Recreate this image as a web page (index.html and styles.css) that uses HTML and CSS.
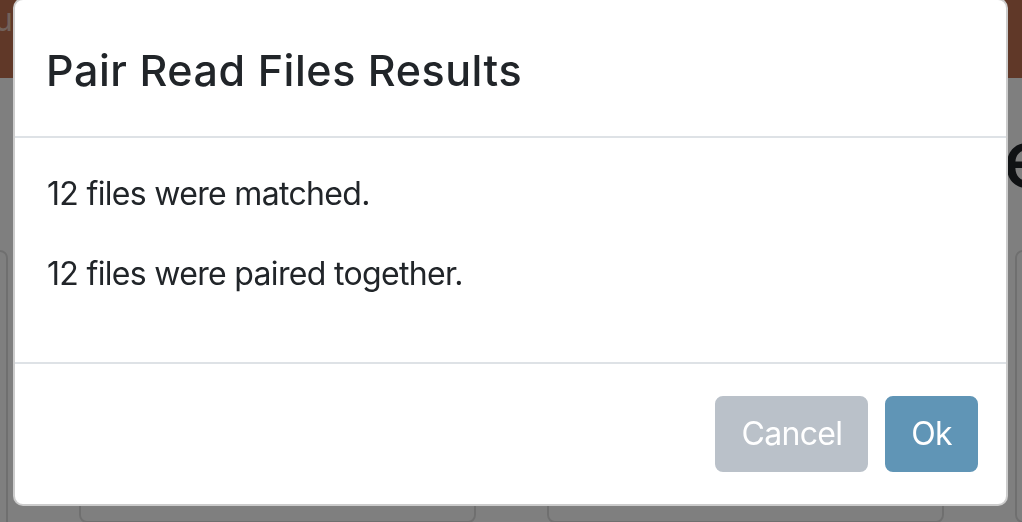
FILE: index.html
```html
<!DOCTYPE html>
<html lang="en">
<head>
<meta charset="utf-8">
<title>Pair Read Files Results</title>
<link rel="stylesheet" href="styles.css">
</head>
<body>
<div class="page">
  <header class="navbar"><span class="brand">u</span></header>
  <main class="content">
    <h1 class="heading">e</h1>
    <div class="cards">
      <div class="card card-first"></div>
      <div class="card"></div>
      <div class="card"></div>
      <div class="card"></div>
    </div>
  </main>
</div>
<div class="backdrop"></div>
<div class="modal">
  <div class="modal-header">
    <h5 class="modal-title">Pair Read Files Results</h5>
  </div>
  <div class="modal-body">
    <p>12 files were matched.</p>
    <p>12 files were paired together.</p>
  </div>
  <div class="modal-footer">
    <button class="btn btn-cancel" type="button">Cancel</button>
    <button class="btn btn-ok" type="button">Ok</button>
  </div>
</div>
</body>
</html>
```
FILE: styles.css
```css
html, body {
  margin: 0;
  padding: 0;
  width: 1022px;
  height: 522px;
  overflow: hidden;
  background: #ffffff;
  font-family: Inter, "Liberation Sans", sans-serif;
  color: #212529;
}

.page {
  width: 1022px;
  height: 522px;
  overflow: hidden;
}

.navbar {
  height: 78px;
  background: #c07050;
  display: flex;
  align-items: flex-start;
}

.brand {
  margin-left: -6px;
  margin-top: 2px;
  font-size: 32px;
  line-height: 36px;
  color: rgba(255, 255, 255, 0.6);
}

.content {
  display: flex;
  flex-direction: column;
}

.heading {
  margin: 32px 0 0 1003px;
  font-size: 80px;
  line-height: 96px;
  font-weight: 500;
  white-space: nowrap;
  color: #212529;
}

.cards {
  display: flex;
  gap: 71px;
  margin-left: -389px;
  margin-top: 44px;
  align-items: flex-start;
}

.card {
  flex: 0 0 397px;
  height: 273px;
  box-sizing: border-box;
  border: 2px solid rgba(0, 0, 0, 0.125);
  border-radius: 8px;
}

.card-first {
  height: 400px;
}

.backdrop {
  position: fixed;
  inset: 0;
  background: rgba(0, 0, 0, 0.5);
}

.modal {
  position: absolute;
  left: 13px;
  top: -2px;
  width: 995px;
  box-sizing: border-box;
  background: #ffffff;
  border: 2px solid rgba(0, 0, 0, 0.2);
  border-radius: 10px;
}

.modal-header {
  padding: 40px 32px 36px;
  border-bottom: 2px solid #dee2e6;
}

.modal-title {
  margin: 0 0 0 -1px;
  font-size: 43px;
  line-height: 60px;
  font-weight: 500;
  letter-spacing: 0.55px;
  color: #212529;
}

.modal-body {
  padding: 32px;
}

.modal-body p {
  margin: 0 0 32px;
  font-size: 32px;
  line-height: 48px;
  letter-spacing: -0.68px;
  color: #212529;
}

.modal-footer {
  border-top: 2px solid #dee2e6;
  padding: 24px 28px 24px 24px;
  display: flex;
  justify-content: flex-end;
  align-items: center;
  gap: 17px;
}

.btn {
  margin: 8px 0;
  padding: 12px 24px;
  font-family: inherit;
  font-size: 32px;
  line-height: 48px;
  font-weight: 400;
  letter-spacing: -0.68px;
  color: #ffffff;
  border: 2px solid transparent;
  border-radius: 8px;
}

.btn-cancel {
  background: #bac1c9;
  border-color: #bac1c9;
}

.btn-ok {
  background: #6095b6;
  border-color: #6095b6;
}
```
